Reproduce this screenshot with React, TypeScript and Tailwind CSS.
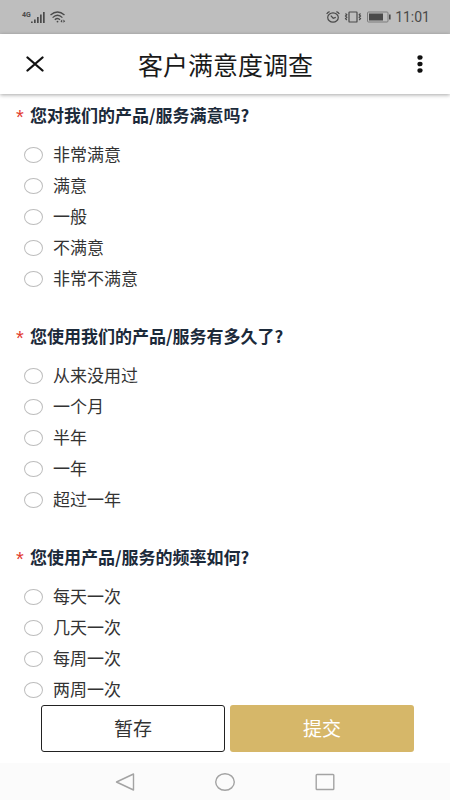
const questions = [
  {
    id: 'satisfaction',
    title: '您对我们的产品/服务满意吗?',
    options: ['非常满意', '满意', '一般', '不满意', '非常不满意'],
  },
  {
    id: 'duration',
    title: '您使用我们的产品/服务有多久了?',
    options: ['从来没用过', '一个月', '半年', '一年', '超过一年'],
  },
  {
    id: 'frequency',
    title: '您使用产品/服务的频率如何?',
    options: ['每天一次', '几天一次', '每周一次', '两周一次'],
  },
]

function SignalIcon() {
  return (
    <svg width="15" height="13" viewBox="0 0 15 13" fill="#4a4a4a" aria-hidden="true">
      <rect x="0" y="10.5" width="1.7" height="1.5" />
      <rect x="3" y="8.5" width="1.7" height="3.5" />
      <rect x="6" y="6" width="1.7" height="6" />
      <rect x="9" y="3.5" width="1.7" height="8.5" />
      <rect x="12" y="1" width="1.7" height="11" />
    </svg>
  )
}

function WifiIcon() {
  return (
    <svg width="16" height="12" viewBox="0 0 16 12" fill="none" stroke="#4a4a4a" strokeWidth="1.3" aria-hidden="true">
      <path d="M0.5 4 Q7.5 -2 14.5 4" />
      <path d="M2.6 6.6 Q7.5 2 12.4 6.6" />
      <path d="M4.8 8.8 Q7.5 6.2 10 8.8" />
      <circle cx="7.5" cy="10.6" r="0.9" fill="#4a4a4a" stroke="none" />
      <path d="M12.2 8.6 L10.4 10.2 L12.2 11.8 Z M13.4 8.6 L15.2 10.2 L13.4 11.8 Z" fill="#4a4a4a" stroke="none" />
    </svg>
  )
}

function AlarmIcon() {
  return (
    <svg width="14" height="12" viewBox="0 0 14 12" fill="none" stroke="#4a4a4a" strokeWidth="1.2" aria-hidden="true">
      <ellipse cx="7" cy="6.5" rx="5.3" ry="4.7" />
      <path d="M0.7 3 Q1.6 1.2 3.6 0.7 M13.3 3 Q12.4 1.2 10.4 0.7" />
      <path d="M4.8 4.6 L7.2 7.2 L9.8 6.4" />
    </svg>
  )
}

function VibrateIcon() {
  return (
    <svg width="18" height="12" viewBox="0 0 18 12" fill="none" stroke="#4a4a4a" strokeWidth="1.2" aria-hidden="true">
      <rect x="5" y="1" width="8" height="10" rx="0.6" />
      <path d="M1.5 2.5 L2.8 3.7 L1.5 5 L2.8 6.3 L1.5 7.6 L2.8 9 M16.5 2.5 L15.2 3.7 L16.5 5 L15.2 6.3 L16.5 7.6 L15.2 9" />
    </svg>
  )
}

function BatteryIcon() {
  return (
    <svg width="24" height="12" viewBox="0 0 24 12" aria-hidden="true">
      <rect x="0.5" y="1" width="20.5" height="10" rx="1" fill="none" stroke="#7d7d7d" />
      <rect x="2" y="2.5" width="14" height="7" fill="#4a4a4a" />
      <rect x="22" y="3.5" width="1.6" height="5" fill="#4a4a4a" />
    </svg>
  )
}

function StatusBar() {
  return (
    <div className="flex h-[34px] shrink-0 items-center justify-between bg-[#bebebe] pl-[22px] pr-5 text-[#4a4a4a]">
      <div className="flex items-center gap-1">
        <div className="flex items-start">
          <span className="font-[Roboto] text-[7px] leading-[8px] font-bold">4G</span>
          <SignalIcon />
        </div>
        <WifiIcon />
      </div>
      <div className="flex items-center">
        <AlarmIcon />
        <span className="ml-1 mr-[5px]">
          <VibrateIcon />
        </span>
        <BatteryIcon />
        <span className="ml-1 font-[Roboto] text-[14px] leading-5">11:01</span>
      </div>
    </div>
  )
}

function Header() {
  return (
    <header className="relative flex h-[60px] shrink-0 items-center justify-between bg-white pl-[25px] pr-4 shadow-[0_1px_4px_rgba(0,0,0,0.35)]">
      <button type="button" aria-label="关闭" className="flex h-10 w-5 items-center justify-center">
        <svg width="20" height="16" viewBox="0 0 20 16" fill="none" stroke="#111" strokeWidth="2.3" strokeLinecap="round">
          <path d="M2.5 1.5 L17.5 14.5 M17.5 1.5 L2.5 14.5" />
        </svg>
      </button>
      <h1 className="text-[25px] leading-8 text-[#1a1a1a]">客户满意度调查</h1>
      <button type="button" aria-label="更多" className="flex h-10 w-7 items-center justify-center">
        <svg width="6" height="18" viewBox="0 0 6 18" fill="#111">
          <ellipse cx="3" cy="2.5" rx="2.6" ry="2.3" />
          <ellipse cx="3" cy="9" rx="2.6" ry="2.3" />
          <ellipse cx="3" cy="15.5" rx="2.6" ry="2.3" />
        </svg>
      </button>
    </header>
  )
}

function Question({ id, title, options }: { id: string; title: string; options: string[] }) {
  return (
    <fieldset className="mb-[27px]">
      <legend className="mb-[7px] flex h-8 items-center pb-[2px] text-[17px] font-bold text-[#1c2a3a]">
        <span className="w-[14px] pt-1 font-['Liberation_Sans'] text-[20px] leading-6 font-normal text-[#e23b30]">*</span>
        {title}
      </legend>
      {options.map((option) => (
        <label key={option} className="flex h-[31px] items-center gap-[10px] pl-2 text-[17px] text-[#333]">
          <input
            type="radio"
            name={id}
            value={option}
            className="h-4 w-[19px] appearance-none rounded-[50%] border border-[#bdbdbd] bg-white checked:border-4 checked:border-[#d6b769]"
          />
          <span className="pb-[2px] leading-5">{option}</span>
        </label>
      ))}
    </fieldset>
  )
}

function NavBar() {
  return (
    <nav className="flex h-[37px] shrink-0 items-center justify-center gap-20 bg-[#fbfbfb]">
      <button type="button" aria-label="返回" className="flex w-5 justify-center">
        <svg width="20" height="18" viewBox="0 0 20 18" fill="none" stroke="#a3a3a3" strokeWidth="1.4" strokeLinejoin="round">
          <path d="M18.5 1 V17 L1.5 9 Z" />
        </svg>
      </button>
      <button type="button" aria-label="主页" className="flex w-5 justify-center">
        <svg width="20" height="18" viewBox="0 0 20 18" fill="none" stroke="#a3a3a3" strokeWidth="1.4">
          <ellipse cx="10" cy="9" rx="9.3" ry="8.3" />
        </svg>
      </button>
      <button type="button" aria-label="最近任务" className="flex w-5 justify-center">
        <svg width="20" height="18" viewBox="0 0 20 18" fill="none" stroke="#a3a3a3" strokeWidth="1.4">
          <rect x="1.2" y="1.5" width="17.6" height="15" rx="0.8" />
        </svg>
      </button>
    </nav>
  )
}

export default function App() {
  return (
    <div className="flex h-screen flex-col bg-white font-['Noto_Sans_CJK_SC',sans-serif]">
      <StatusBar />
      <Header />
      <form className="flex min-h-0 flex-1 flex-col">
        <div className="min-h-0 flex-1 overflow-hidden px-4 pt-[6px]">
          {questions.map((question) => (
            <Question key={question.id} {...question} />
          ))}
        </div>
        <div className="grid shrink-0 grid-cols-2 gap-[5px] pt-[7px] pr-9 pb-[11px] pl-[41px] text-[19px] leading-6">
          <button type="button" className="h-[47px] rounded-[3px] border border-[#222] bg-white pb-[2px] text-[#333]">
            暂存
          </button>
          <button type="submit" className="h-[47px] rounded-[3px] bg-[#d6b769] pb-[2px] text-white">
            提交
          </button>
        </div>
      </form>
      <NavBar />
    </div>
  )
}
